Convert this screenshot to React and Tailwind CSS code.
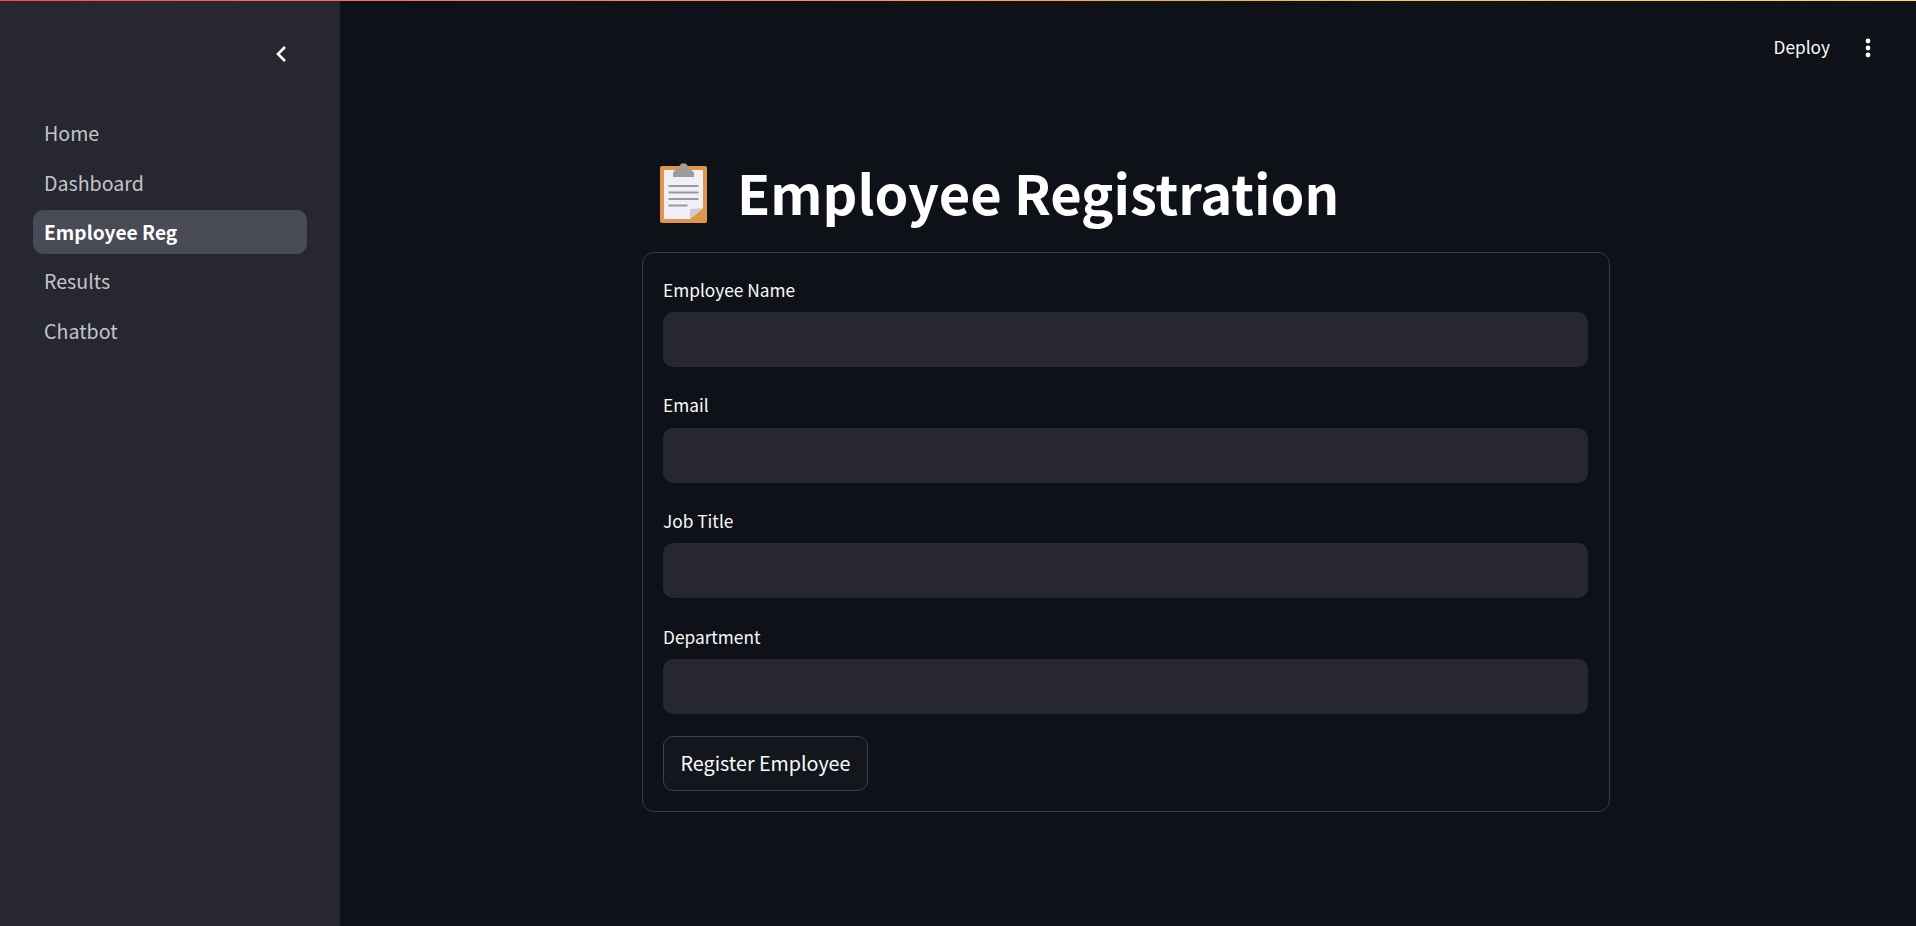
const FONT = "font-['Noto_Sans_CJK_SC','Noto_Sans',sans-serif]";

const navItems = [
  { label: 'Home' },
  { label: 'Dashboard' },
  { label: 'Employee Reg', active: true },
  { label: 'Results' },
  { label: 'Chatbot' },
];

const fields = ['Employee Name', 'Email', 'Job Title', 'Department'];

const ClipboardIcon = () => (
  <svg width="50" height="60" viewBox="0 0 50 60" className="block">
    <rect x="0" y="3" width="47" height="57" rx="2" fill="#e0964a" />
    <path d="M4 7h39v38L30 56H5a1 1 0 0 1-1-1z" fill="#f3eff8" />
    <path d="M30 56V48a2 2 0 0 1 2-2q6 0 11-2z" fill="#cfc8d8" />
    <path d="M13 14V11q0-3 3-4l3-1.5h9l3 1.5q3 1 3 4v3z" fill="#9b9b9b" />
    <circle cx="23.5" cy="4.8" r="4.5" fill="#9b9b9b" />
    <circle cx="23.5" cy="4.5" r="1.6" fill="#e0964a" />
    <rect x="8.5" y="22" width="30" height="2" fill="#9a9a9e" />
    <rect x="8.5" y="28.5" width="30" height="2" fill="#9a9a9e" />
    <rect x="8.5" y="35" width="30" height="2" fill="#9a9a9e" />
    <rect x="8.5" y="41.5" width="19" height="2" fill="#9a9a9e" />
  </svg>
);

const Sidebar = () => (
  <aside className="w-[340px] shrink-0 bg-[#262730] flex flex-col">
    <div className="h-[106px] flex justify-end items-start pt-[44px] pr-[48px]">
      <svg width="20" height="20" viewBox="0 0 20 20" fill="none" stroke="#ffffff" strokeWidth="2.6">
        <path d="M13 3L6 10l7 7" />
      </svg>
    </div>
    <nav className="px-[33px] flex flex-col gap-[5.4px] pt-[5px]">
      {navItems.map((item) => (
        <div
          key={item.label}
          className={`h-[44px] rounded-[10px] px-[11px] flex items-center leading-none ${
            item.active ? 'bg-[#484a56] text-white font-bold text-[19.2px] pt-[2px]' : 'text-[#c4c5c9] text-[19.6px]'
          }`}
        >
          {item.label}
        </div>
      ))}
    </nav>
  </aside>
);

const Field = ({ label }) => (
  <div className="flex flex-col">
    <label className="h-[34.3px] text-[17.3px] leading-[24px] text-[#fafafa]">{label}</label>
    <input type="text" className="h-[55px] w-full rounded-[10px] bg-[#262730] outline-none" />
  </div>
);

const App = () => (
  <div className={`relative h-[926px] flex overflow-hidden bg-[#0e1117] text-white ${FONT}`}>
    {/* gradient stripe over the top of the page */}
    <div className="absolute top-0 left-0 right-0 h-[1px] bg-gradient-to-r from-[#ff4b4b] to-[#ffe14b]" />
    <Sidebar />
    <main className="flex-1 flex flex-col">
      <div className="h-[96px] flex justify-end items-start pt-[35px] pr-[44px] gap-[34px]">
        <span className="text-[17.3px] leading-[24px] text-[#fafafa]">Deploy</span>
        <svg width="8" height="22" viewBox="0 0 8 22" fill="#fafafa" className="mt-[2px]">
          <circle cx="4" cy="4" r="2.4" />
          <circle cx="4" cy="11" r="2.4" />
          <circle cx="4" cy="18" r="2.4" />
        </svg>
      </div>
      <div className="w-[968px] ml-[302px]">
        <div className="h-[156px] flex items-center pl-[18px] gap-[27px] pt-[38px]">
          <ClipboardIcon />
          <h1 className="text-[54.2px] leading-none font-bold text-white mt-[-2px]">Employee Registration</h1>
        </div>
        <form className="h-[560px] rounded-[12px] border border-[#3a3c45] pl-[20px] pr-[21px] pt-[24.7px] flex flex-col gap-[22px]">
          <div className="flex flex-col gap-[26.37px]">
            {fields.map((name) => (
              <Field key={name} label={name} />
            ))}
          </div>
          <button
            type="button"
            className="self-start h-[55px] w-[205px] pb-[2px] rounded-[10px] border border-[#3f414a] bg-[#13161d] text-[19.7px] text-[#fafafa]"
          >
            Register Employee
          </button>
        </form>
      </div>
    </main>
  </div>
);

export default App;
